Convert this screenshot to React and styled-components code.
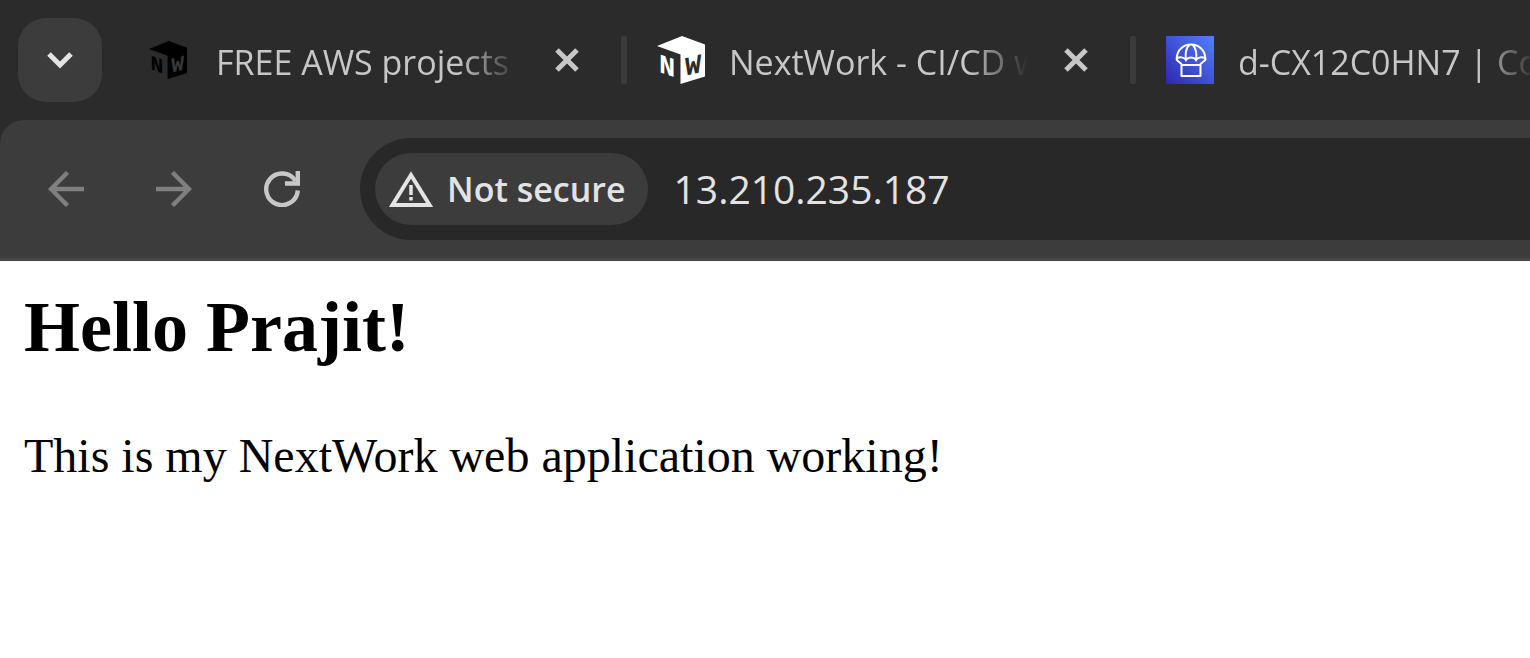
import React from "react";
import styled, { createGlobalStyle } from "styled-components";

const GlobalStyle = createGlobalStyle`
  *, *::before, *::after { box-sizing: border-box; }
  body {
    margin: 0;
    background: #fff;
    color: #000;
    overflow-x: hidden;
  }
  button, input { font: inherit; color: inherit; }
`;

const uiFont = `"Segoe UI", "Open Sans", "Noto Sans", sans-serif`;

const Browser = styled.div`
  background: #2b2b2b;
  font-family: ${uiFont};
`;

const TabStrip = styled.header`
  display: flex;
  align-items: center;
  padding: 18px 0 18px 18px;
  overflow: hidden;
`;

const IconButton = styled.button`
  display: flex;
  flex: none;
  align-items: center;
  justify-content: center;
  width: ${(p) => p.$size}px;
  height: ${(p) => p.$size}px;
  padding: 0;
  border: 0;
  border-radius: ${(p) => p.$radius || 8}px;
  background: ${(p) => p.$fill || "transparent"};
  color: ${(p) => p.$tone || "#c7c7c7"};
`;

const Tabs = styled.div`
  display: flex;
  align-items: center;
  gap: 30px;
  margin-left: 42px;
`;

const Tab = styled.div`
  display: flex;
  flex: none;
  width: ${(p) => p.$width}px;
  align-items: center;
  gap: 24px;
`;

const Favicon = styled.span`
  display: flex;
  flex: none;
  align-items: center;
  justify-content: center;
  width: 48px;
  height: 48px;
`;

const TabTitle = styled.span`
  flex: 1;
  min-width: 0;
  overflow: hidden;
  white-space: nowrap;
  font-size: 34px;
  line-height: 48px;
  padding-top: 4px;
  color: #c7c7c7;
  mask-image: linear-gradient(to right, #000 calc(100% - 60px), transparent);
`;

const Separator = styled.span`
  flex: none;
  width: 6px;
  height: 48px;
  border-radius: 2px;
  background: #3c3c3c;
`;

const Toolbar = styled.nav`
  display: flex;
  align-items: center;
  padding: 18px 0 18px 30px;
  border-bottom: 3px solid #474747;
  border-top-left-radius: 24px;
  background: #3c3c3c;
`;

const NavButtons = styled.div`
  display: flex;
  flex: none;
  gap: 36px;
  margin-right: 42px;
`;

const AddressBar = styled.div`
  display: flex;
  flex: 1;
  min-width: 0;
  align-items: center;
  gap: 26px;
  padding: 15px 0 15px 15px;
  border-radius: 51px 0 0 51px;
  background: #282828;
  color: #e3e3e3;
`;

const SecurityChip = styled.button`
  display: flex;
  flex: none;
  align-items: center;
  gap: 14px;
  height: 72px;
  padding: 0 22px 0 14px;
  border: 0;
  border-radius: 36px;
  background: #3c3c3c;
  font-size: 34px;
  font-weight: 600;
  line-height: 48px;
  white-space: nowrap;
`;

const AddressInput = styled.input`
  flex: 1;
  min-width: 0;
  height: 72px;
  padding: 0 0 2px;
  border: 0;
  outline: 0;
  background: transparent;
  font-size: 39px;
`;

const Page = styled.main`
  padding: 24px;
  font-family: "Times New Roman", "Liberation Serif", serif;
`;

const Heading = styled.h2`
  margin: 0 0 60px;
  font-size: 72px;
  line-height: 84px;
`;

const Paragraph = styled.p`
  margin: 0;
  font-size: 48px;
  line-height: 54px;
`;

const LogoText = styled.text`
  font-family: "Liberation Mono", monospace;
  font-weight: 700;
`;

function CubeLogo({ size, color, cutout }) {
  return (
    <svg width={size} height={size} viewBox="0 0 48 48" aria-hidden="true">
      <path d="M25 0 48 8.5V40.5L23.5 48V18.5L0 10Z" fill={color} />
      <LogoText transform="translate(2 36) skewY(18)" fontSize="27" fill={color}>N</LogoText>
      <LogoText transform="translate(28 40) skewY(-14)" fontSize="27" fill={cutout}>W</LogoText>
    </svg>
  );
}

function DeployLogo() {
  return (
    <svg width="48" height="48" viewBox="0 0 48 48" aria-hidden="true">
      <defs>
        <linearGradient id="deploy" x1="0" y1="1" x2="1" y2="0">
          <stop offset="0" stopColor="#2e27ad" />
          <stop offset="1" stopColor="#527fff" />
        </linearGradient>
      </defs>
      <path d="M0 0H48V48H0Z" fill="url(#deploy)" />
      <g fill="none" stroke="#fff" strokeWidth="2" strokeLinejoin="round" strokeLinecap="round">
        <path d="M15.5 28 10.8 24V21.5C11.5 14 17 8.6 25 8.6S38.5 14 39.3 21.5V24L34.5 28" />
        <path d="M10.8 22.5Q15.5 19.5 20 23.5Q25 19.5 30 23.5Q34.5 19.5 39.3 22.5" />
        <path d="M23 9Q18.5 14 20 24.5M27 9Q31.5 14 30 24.5" />
        <path d="M15.5 29H34.5V40H15.5Z" />
      </g>
    </svg>
  );
}

function CloseIcon() {
  return (
    <svg width="24" height="24" viewBox="0 0 24 24" aria-hidden="true">
      <path d="M2 2 22 22M22 2 2 22" stroke="currentColor" strokeWidth="5" />
    </svg>
  );
}

function ArrowIcon({ forward }) {
  return (
    <svg width="36" height="36" viewBox="0 0 36 36" aria-hidden="true">
      <path
        d={forward ? "M0 18H33M16.5 1.5 33 18 16.5 34.5" : "M36 18H3M19.5 1.5 3 18 19.5 34.5"}
        fill="none"
        stroke="currentColor"
        strokeWidth="4.4"
      />
    </svg>
  );
}

const tabs = [
  { title: "FREE AWS projects", width: 447, icon: <CubeLogo size={38} color="#000" cutout="#383838" /> },
  { title: "NextWork - CI/CD with", width: 443, icon: <CubeLogo size={48} color="#fff" cutout="#2b2b2b" /> },
  { title: "d-CX12C0HN7 | CodeDeploy", width: 443, icon: <DeployLogo /> },
];

export default function App() {
  return (
    <>
      <GlobalStyle />
      <Browser>
        <TabStrip>
          <IconButton $size={84} $radius={28} $fill="#3c3c3c" $tone="#e3e3e3" aria-label="Search tabs">
            <svg width="26" height="18" viewBox="0 0 26 18" aria-hidden="true">
              <path d="M2 3 13 14 24 3" fill="none" stroke="currentColor" strokeWidth="5" />
            </svg>
          </IconButton>
          <Tabs>
            {tabs.map((tab, i) => (
              <React.Fragment key={tab.title}>
                {i > 0 && <Separator />}
                <Tab $width={tab.width}>
                  <Favicon>{tab.icon}</Favicon>
                  <TabTitle>{tab.title}</TabTitle>
                  <IconButton $size={48} aria-label={`Close ${tab.title}`}>
                    <CloseIcon />
                  </IconButton>
                </Tab>
              </React.Fragment>
            ))}
          </Tabs>
        </TabStrip>
        <Toolbar>
          <NavButtons>
            <IconButton $size={72} $tone="#7f7f7f" aria-label="Back">
              <ArrowIcon />
            </IconButton>
            <IconButton $size={72} $tone="#7f7f7f" aria-label="Forward">
              <ArrowIcon forward />
            </IconButton>
            <IconButton $size={72} aria-label="Reload">
              <svg width="36" height="36" viewBox="0 0 36 36" aria-hidden="true">
                <g fill="none" stroke="currentColor" strokeWidth="4.4">
                  <path d="M33.8 19.5A15.8 15.8 0 1 1 31.5 10" />
                  <path d="M33.8 0V12.5H21" />
                </g>
              </svg>
            </IconButton>
          </NavButtons>
          <AddressBar>
            <SecurityChip>
              <svg width="44" height="36" viewBox="0 0 44 36" aria-hidden="true">
                <path d="M22 4 40.5 34H3.5Z" fill="none" stroke="currentColor" strokeWidth="4" />
                <path d="M22 14V24M22 26V29.500" stroke="currentColor" strokeWidth="3.500" />
              </svg>
              Not secure
            </SecurityChip>
            <AddressInput aria-label="Address" defaultValue="13.210.235.187" spellCheck={false} />
          </AddressBar>
        </Toolbar>
      </Browser>
      <Page>
        <Heading>Hello Prajit!</Heading>
        <Paragraph>This is my NextWork web application working!</Paragraph>
      </Page>
    </>
  );
}
